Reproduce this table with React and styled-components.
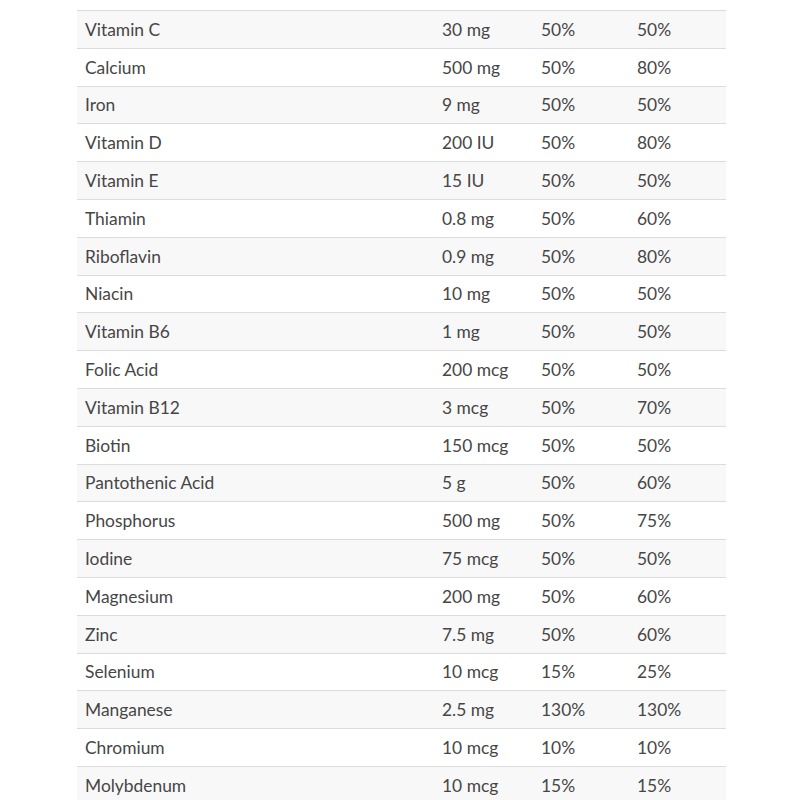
import styled, { createGlobalStyle } from "styled-components";

const GlobalStyle = createGlobalStyle`
  body {
    margin: 0;
    background: #ffffff;
    font-family: Lato, "Open Sans", sans-serif;
  }
`;

const Page = styled.div`
  padding: 10px 74px 0 77px;
`;

const Table = styled.table`
  width: 649px;
  border-collapse: collapse;
  table-layout: fixed;
  font-size: 17.4px;
  color: #464646;
  border-top: 1px solid #dcdcdc;
`;

const Col = styled.col`
  width: ${props => props.$w}px;
`;

const Row = styled.tr`
  background: ${props => (props.$striped ? "#f8f8f8" : "#ffffff")};
  border-bottom: 1px solid #dcdcdc;
`;

const Cell = styled.td`
  height: 36.8px;
  padding: 0 8px;
  vertical-align: middle;
  white-space: nowrap;
`;

const widths = [357, 99, 96, 97];

const rows = [
  ["Vitamin C", "30 mg", "50%", "50%"],
  ["Calcium", "500 mg", "50%", "80%"],
  ["Iron", "9 mg", "50%", "50%"],
  ["Vitamin D", "200 IU", "50%", "80%"],
  ["Vitamin E", "15 IU", "50%", "50%"],
  ["Thiamin", "0.8 mg", "50%", "60%"],
  ["Riboflavin", "0.9 mg", "50%", "80%"],
  ["Niacin", "10 mg", "50%", "50%"],
  ["Vitamin B6", "1 mg", "50%", "50%"],
  ["Folic Acid", "200 mcg", "50%", "50%"],
  ["Vitamin B12", "3 mcg", "50%", "70%"],
  ["Biotin", "150 mcg", "50%", "50%"],
  ["Pantothenic Acid", "5 g", "50%", "60%"],
  ["Phosphorus", "500 mg", "50%", "75%"],
  ["Iodine", "75 mcg", "50%", "50%"],
  ["Magnesium", "200 mg", "50%", "60%"],
  ["Zinc", "7.5 mg", "50%", "60%"],
  ["Selenium", "10 mcg", "15%", "25%"],
  ["Manganese", "2.5 mg", "130%", "130%"],
  ["Chromium", "10 mcg", "10%", "10%"],
  ["Molybdenum", "10 mcg", "15%", "15%"],
];

export default function App() {
  return (
    <>
      <GlobalStyle />
      <Page>
        <Table>
          <colgroup>
            {widths.map((w, i) => (
              <Col key={i} $w={w} />
            ))}
          </colgroup>
          <tbody>
            {rows.map((r, i) => (
              <Row key={r[0]} $striped={i % 2 === 0}>
                {r.map((c, j) => (
                  <Cell key={j}>{c}</Cell>
                ))}
              </Row>
            ))}
          </tbody>
        </Table>
      </Page>
    </>
  );
}
